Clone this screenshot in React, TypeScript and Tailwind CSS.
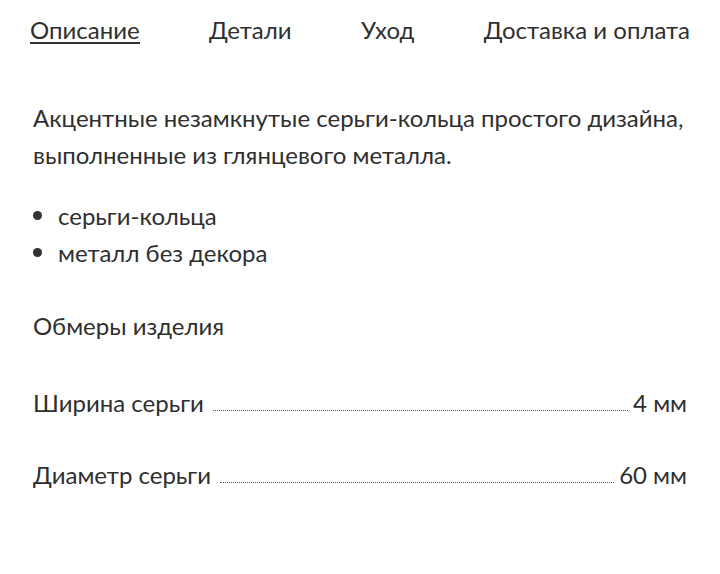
import React from 'react';

const tabs = ['Описание', 'Детали', 'Уход', 'Доставка и оплата'];

const rows = [
  { label: 'Ширина серьги', value: '4 мм' },
  { label: 'Диаметр серьги', value: '60 мм' },
];

export default function App() {
  return (
    <div className="w-[720px] h-[574px] bg-white text-[#2f2f2f] font-['Lato',sans-serif]">
      {/* TABS */}
      <div className="flex justify-between px-[30px] pt-[18px]">
        {tabs.map((t, i) => (
          <span
            key={t}
            className={`text-[24px] leading-[24px] border-b-2 ${i === 0 ? 'border-[#333333]' : 'border-transparent'}`}
          >
            {t}
          </span>
        ))}
      </div>

      <div className="px-[33px] pt-[55px] text-[24px]">
        <p className="leading-[37px]">
          Акцентные незамкнутые серьги-кольца простого дизайна, выполненные из глянцевого металла.
        </p>

        <ul className="mt-[24px] leading-[37px]">
          <li className="flex items-center gap-[16px]">
            <span className="w-[9px] h-[9px] rounded-full bg-[#333333]" />
            серьги-кольца
          </li>
          <li className="flex items-center gap-[16px]">
            <span className="w-[9px] h-[9px] rounded-full bg-[#333333]" />
            металл без декора
          </li>
        </ul>

        <h3 className="mt-[36px] leading-[37px]">Обмеры изделия</h3>

        <div className="mt-[40px] flex flex-col gap-[35px]">
          {rows.map(r => (
            <div key={r.label} className="flex items-end leading-[37px]">
              <span>{r.label}</span>
              <span className="flex-1 ml-[9px] mr-[5px] mb-[10px] border-b border-dotted border-[#555555]" />
              <span>{r.value}</span>
            </div>
          ))}
        </div>
      </div>
    </div>
  );
}
